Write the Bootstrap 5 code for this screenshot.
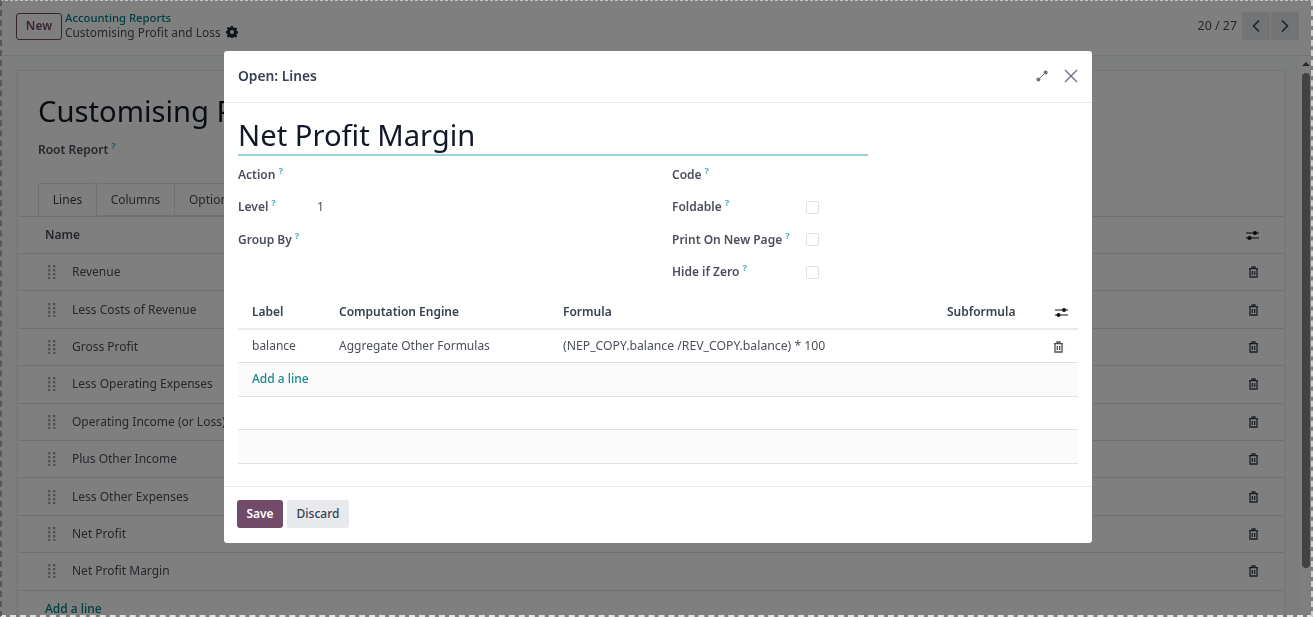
<!DOCTYPE html>
<html lang="en"><head><meta charset="utf-8"><title>Open: Lines</title>
<link rel="stylesheet" href="https://cdn.jsdelivr.net/npm/bootstrap@5.3.0/dist/css/bootstrap.min.css">
<style>
html,body{height:617px;overflow:hidden}
body{font-family:"Noto Sans","Open Sans",sans-serif;font-size:12px;color:#4a4f59;background:#f9fafb;filter:blur(.35px)}
.app-shell{height:617px;overflow:hidden;padding-right:28px}
.ctl-panel{height:56px;margin-right:-28px;padding:0 14px 3px 16px;background:#fff;border-bottom:1px solid #e7e9ed}
.btn-new{font-size:12px;font-weight:600;color:#714b67;border:1px solid #714b67;border-radius:3px;padding:0;width:46px;height:27px;background:#fff}
.crumb-wrap{margin:-2px 0 0 3px}
.crumb-a{color:#017e84;font-weight:500;line-height:14px;text-decoration:none;display:block;font-size:11.3px}
.crumb-b{line-height:15px;white-space:nowrap;font-size:11.9px}
.gear-x{margin-left:5px}
.pager-txt{font-size:12.4px;margin-right:5px}
.pager-btn{width:28px;height:28px;background:#e7e9ed;display:flex;align-items:center;justify-content:center;color:#374151}
.pager-gap{margin-left:1px}
.sheet{margin:14px 0 0 17px;width:1268px;background:#fff;border:1px solid #e7e9ed;height:600px}
.big-title{font-size:29.2px;line-height:40px;margin:20px 0 0 20px;color:#111827;font-weight:400;white-space:nowrap}
.root-lab{margin:10px 0 0 20px;font-weight:600;line-height:18px}
.hint{font-size:9.5px;font-weight:700;vertical-align:super;line-height:0;margin-left:3px;color:#4fb0cc}
.tabs-x{margin:24px 0 0 20px;width:400px;border:0;height:33px;flex-wrap:nowrap}
.tab-x{height:33px;padding:0 14px;display:flex;align-items:center;border:1px solid #dee2e6;border-left:0;color:#4a4f59}
.tab-x.is-on{border:1px solid #dee2e6;border-bottom-color:#fff;border-radius:3px 3px 0 0;width:59px;justify-content:center;padding:0;color:#374151}
.tab-col{width:78px;justify-content:center;padding:0}
.line-row{height:37.4px;border-top:1px solid #dee2e6;display:flex;align-items:center;padding:0 26px 0 30px}
.line-head{height:37px;padding:0 24px 0 27px;font-weight:600}
.line-add{padding-left:27px}
.line-row .lbl{margin-left:16px}
.line-row .trash-x{margin-right:-1px}
.add-link{color:#017e84;font-weight:500;text-decoration:none}
.scroll-track{position:absolute;top:56px;right:2px;bottom:0;width:11px;background:#fff}
.scroll-thumb{position:absolute;top:17px;left:2px;width:8px;height:495px;background:#858585;border-radius:4px}
.scroll-up{position:absolute;top:6px;left:2px;width:0;height:0;border:4px solid transparent;border-bottom-color:#505050;border-top:0}
.dash-edge{position:fixed;inset:0;border-style:dashed;border-width:1px 2px 2px 2px;border-color:#c4c4c4 #cfcfcf #e4e4e4 #5c5560;z-index:2000;pointer-events:none}
.modal-dialog.dlg-x{max-width:none;width:868px;margin:51px 0 0 224px}
.dlg-x .modal-content{height:492px;border:0;border-radius:3px;color:#4a4f59}
.dlg-x .modal-header{height:52px;padding:0 14px 1px;border-bottom:1px solid #e7e9ed}
.dlg-x .modal-title{font-size:13.8px;font-weight:600;color:#374151}
.dlg-x .modal-body{padding:0 14px;height:383px;flex:none}
.dlg-x .modal-footer{height:57px;padding:0 13px 3px;justify-content:flex-start;gap:4px;border-top:1px solid #e7e9ed}
.dlg-x .modal-footer>*{margin:0}
.name-inp{width:630px;height:53px;border-bottom:2px solid #9ad3d4;font-size:29.2px;line-height:40px;padding-top:12px;color:#111827;white-space:nowrap}
.frm{margin-top:3px;--bs-gutter-x:0}
.frm-row{height:32.3px;display:flex;align-items:center}
.frm-row .k{width:79px;font-weight:600;white-space:nowrap}
.frm-r{padding-left:14px}
.frm-r .k{width:134px}
.chk.form-check-input{width:13px;height:13px;margin:0;border:1px solid #dee2e6;border-radius:2px}
.tbl-x{table-layout:fixed;width:840px;margin:7px 0 0;--bs-table-bg:transparent;font-size:12px;color:#4a4f59}
.tbl-x td,.tbl-x th{padding:0 14px;vertical-align:middle;border-color:#dee2e6;color:#4a4f59;white-space:nowrap}
.tbl-x th{font-weight:600;height:34px;color:#374151;border-bottom-width:2px;border-bottom-color:#e7e9ed}
.tbl-x td{height:33.5px}
.tbl-x .stripe td{background:#fbfbfc}
.tbl-x .add-link{color:#1a8a90}
.tbl-x td.fx{font-size:12.23px}
.tbl-x th.sl-cell{padding:0 0 0 12px}
.tbl-x td.tr-cell{padding:0 0 0 6px}
.c1{width:87px}.c2{width:224px}.c3{width:384px}.c4{width:100px}.c5{width:45px}
.btn-save{background:#714b67;color:#fff;font-size:12px;font-weight:600;border:0;border-radius:3px;width:46px;height:28px;padding:0}
.btn-disc{background:#e7e9ed;color:#374151;font-size:12px;font-weight:500;border:0;border-radius:3px;width:62px;height:28px;padding:0}
</style></head><body>
<div class="app-shell">
  <div class="ctl-panel d-flex align-items-center">
    <button class="btn btn-new" type="button">New</button>
    <div class="crumb-wrap flex-grow-1">
      <a class="crumb-a" href="#">Accounting Reports</a>
      <div class="crumb-b d-flex align-items-center">Customising Profit and Loss
        <svg class="gear-x" width="12" height="12" viewBox="0 0 16 16" fill="#1f2937"><path fill-rule="evenodd" d="M6.6 0h2.8l.4 2.2 1.3.6 1.9-1.3 2 2-1.3 1.9.6 1.3 2.2.4v2.8l-2.2.4-.6 1.3 1.3 1.9-2 2-1.9-1.3-1.3.6-.4 2.2H6.6l-.4-2.2-1.3-.6-1.9 1.3-2-2 1.3-1.9-.6-1.3L-.5 9.4V6.6l2.2-.4.6-1.3L1 3l2-2 1.9 1.3 1.3-.6zM8 5.3a2.7 2.7 0 1 0 0 5.4 2.7 2.7 0 0 0 0-5.4z"/></svg>
      </div>
    </div>
    <span class="pager-txt">20 / 27</span>
    <span class="pager-btn"><svg width="10" height="14" viewBox="0 0 10 14" fill="none" stroke="currentColor" stroke-width="1.6"><path d="M8 1.5 2.5 7 8 12.5"/></svg></span>
    <span class="pager-btn pager-gap"><svg width="10" height="14" viewBox="0 0 10 14" fill="none" stroke="currentColor" stroke-width="1.6"><path d="M2 1.5 7.5 7 2 12.5"/></svg></span>
  </div>
  <div class="sheet">
    <div class="big-title">Customising Profit and Loss</div>
    <div class="root-lab">Root Report<span class="hint">?</span></div>
    <ul class="nav tabs-x list-unstyled mb-0">
      <li class="tab-x is-on">Lines</li><li class="tab-x tab-col">Columns</li><li class="tab-x">Options</li>
    </ul>
    <div class="line-row line-head"><span class="flex-grow-1">Name</span>
      <svg width="15" height="13" viewBox="0 0 15 13"><g stroke="#111" stroke-width="1.1"><path d="M1 4h13M1 9h13"/></g><circle cx="10" cy="4" r="2" fill="#111"/><circle cx="4.5" cy="9" r="2" fill="#111"/></svg></div>
    <div id="rows"></div>
    <div class="line-row line-add"><a class="add-link" href="#">Add a line</a></div>
  </div>
</div>
<div class="scroll-track"><span class="scroll-up"></span><span class="scroll-thumb"></span></div>
<div class="modal-backdrop show"></div>
<div class="modal d-block overflow-hidden" tabindex="-1">
 <div class="modal-dialog dlg-x">
  <div class="modal-content">
   <div class="modal-header">
     <h5 class="modal-title flex-grow-1">Open: Lines</h5>
     <svg class="me-3" width="12" height="12" viewBox="0 0 12 12" fill="none" stroke="#6b7280" stroke-width="1"><path d="M3 9l6-6"/><circle cx="2.4" cy="9.6" r="2" fill="#6b7280" stroke="none"/><circle cx="9.6" cy="2.4" r="2" fill="#6b7280" stroke="none"/></svg>
     <svg width="14" height="14" viewBox="0 0 14 14" fill="none" stroke="#6b7280" stroke-width="1.4"><path d="M1 1l12 12M13 1 1 13"/></svg>
   </div>
   <div class="modal-body">
     <div class="name-inp">Net Profit Margin</div>
     <div class="row frm">
       <div class="col-6">
         <div class="frm-row"><span class="k">Action<span class="hint">?</span></span></div>
         <div class="frm-row"><span class="k">Level<span class="hint">?</span></span><span>1</span></div>
         <div class="frm-row"><span class="k">Group By<span class="hint">?</span></span></div>
       </div>
       <div class="col-6 frm-r">
         <div class="frm-row"><span class="k">Code<span class="hint">?</span></span></div>
         <div class="frm-row"><span class="k">Foldable<span class="hint">?</span></span><input class="form-check-input chk" type="checkbox"></div>
         <div class="frm-row"><span class="k">Print On New Page<span class="hint">?</span></span><input class="form-check-input chk" type="checkbox"></div>
         <div class="frm-row"><span class="k">Hide if Zero<span class="hint">?</span></span><input class="form-check-input chk" type="checkbox"></div>
       </div>
     </div>
     <table class="table tbl-x mb-0">
       <colgroup><col class="c1"><col class="c2"><col class="c3"><col class="c4"><col class="c5"></colgroup>
       <thead><tr><th>Label</th><th>Computation Engine</th><th>Formula</th><th>Subformula</th><th class="text-center sl-cell"><svg width="15" height="13" viewBox="0 0 15 13"><g stroke="#111" stroke-width="1.1"><path d="M1 4h13M1 9h13"/></g><circle cx="10" cy="4" r="2" fill="#111"/><circle cx="4.5" cy="9" r="2" fill="#111"/></svg></th></tr></thead>
       <tbody>
         <tr><td>balance</td><td>Aggregate Other Formulas</td><td class="fx">(NEP_COPY.balance /REV_COPY.balance) * 100</td><td></td><td class="text-center tr-cell"><svg width="11" height="12" viewBox="0 0 11 12" fill="none" stroke="#4a4f59" stroke-width="1.3"><path d="M1 2.6h9M4 2.4V1h3v1.4M2 3v8h7V3M4.3 5v4M6.7 5v4"/></svg></td></tr>
         <tr class="stripe"><td colspan="5"><a class="add-link" href="#">Add a line</a></td></tr>
         <tr><td colspan="5"></td></tr>
         <tr class="stripe"><td colspan="5"></td></tr>
       </tbody>
     </table>
   </div>
   <div class="modal-footer">
     <button class="btn btn-save" type="button">Save</button>
     <button class="btn btn-disc" type="button">Discard</button>
   </div>
  </div>
 </div>
</div>
<div class="dash-edge"></div>
<script>
var names=["Revenue","Less Costs of Revenue","Gross Profit","Less Operating Expenses","Operating Income (or Loss)","Plus Other Income","Less Other Expenses","Net Profit","Net Profit Margin"];
var dots='<svg width="8" height="14" viewBox="0 0 8 14" fill="#a0a4ab">'+[1,5,9,13].map(function(y){return '<rect x="0" y="'+(y-1)+'" width="2.4" height="2.4"/><rect x="5" y="'+(y-1)+'" width="2.4" height="2.4"/>'}).join('')+'</svg>';
var trash='<svg class="trash-x" width="11" height="12" viewBox="0 0 11 12" fill="none" stroke="#374151" stroke-width="1.3"><path d="M1 2.6h9M4 2.4V1h3v1.4M2 3v8h7V3M4.3 5v4M6.7 5v4"/></svg>';
document.getElementById('rows').innerHTML=names.map(function(n){return '<div class="line-row">'+dots+'<span class="lbl flex-grow-1">'+n+'</span>'+trash+'</div>'}).join('');
</script>
</body></html>
